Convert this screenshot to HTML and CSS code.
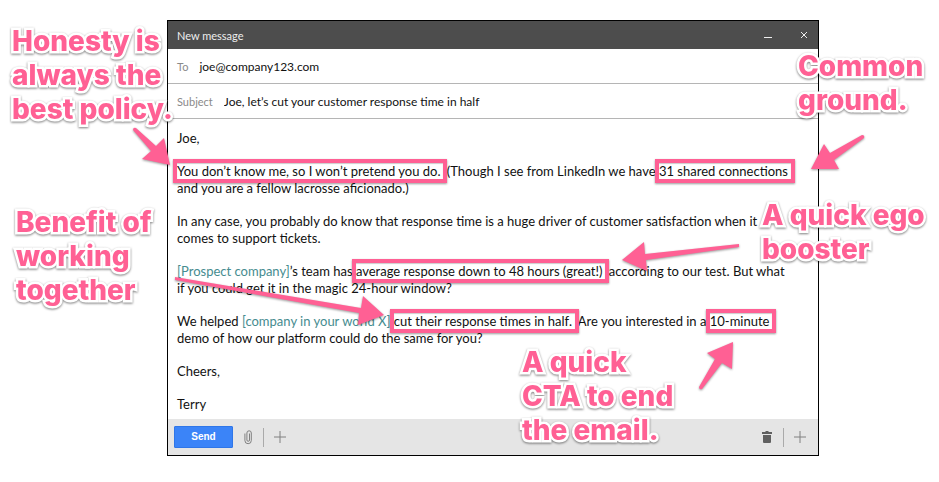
FILE: index.html
```html
<!DOCTYPE html>
<html lang="en">

<head>
  <meta charset="UTF-8" />
  <meta name="viewport" content="width=device-width, initial-scale=1.0" />
  <title>New message</title>
  <link rel="stylesheet" href="styles.css">
</head>

<body>
  <main class="stage">

    <!-- Email window -->
    <form class="mail">
      <header class="mail-header">
        <h1>New message</h1>
        <button type="button" class="icon-btn" aria-label="Minimize">
          <svg width="10" height="10" viewBox="0 0 10 10"><path d="M1 7.500h8" /></svg>
        </button>
        <button type="button" class="icon-btn" aria-label="Close">
          <svg width="10" height="10" viewBox="0 0 10 10"><path d="M2 2l6 6M8 2l-6 6" /></svg>
        </button>
      </header>

      <div class="field">
        <label for="to">To</label>
        <input type="text" id="to" value="joe@company123.com">
      </div>
      <div class="field">
        <label for="subject">Subject</label>
        <input type="text" id="subject" value="Joe, let’s cut your customer response time in half">
      </div>

      <div class="mail-body">
        <p>Joe,</p>
        <p><span class="mark">You don’t know me, so I won’t pretend you do.</span> (Though I see from LinkedIn we have <span class="mark">31 shared connections</span><br>
          and you are a fellow lacrosse aficionado.)</p>
        <p>In any case, you probably do know that response time is a huge driver of customer satisfaction when it<br>
          comes to support tickets.</p>
        <p><span class="token">[Prospect company]</span>’s team has <span class="mark">average response down to 48 hours (great!)</span> according to our test. But what<br>
          if you could get it in the magic 24-hour window?</p>
        <p>We helped <span class="token">[company in your world X]</span> <span class="mark">cut their response times in half.</span> Are you interested in a <span class="mark">10-minute</span><br>
          demo of how our platform could do the same for you?</p>
        <p>Cheers,</p>
        <p>Terry</p>
      </div>

      <footer class="mail-footer">
        <button type="button" class="send">Send</button>
        <button type="button" class="tool" aria-label="Attach file">
          <svg width="10" height="16" viewBox="0 0 10 16"><path d="M6.5 4.500v6.500a1.300 1.300 0 0 1-2.600 0V4a2.200 2.200 0 0 1 4.400 0v7.500a3.200 3.200 0 0 1-6.400 0V4.500" /></svg>
        </button>
        <span class="divider"></span>
        <button type="button" class="tool" aria-label="More options">
          <svg width="12" height="12" viewBox="0 0 12 12"><path d="M6 0v12M0 6h12" /></svg>
        </button>
        <span class="spacer"></span>
        <button type="button" class="tool trash" aria-label="Discard">
          <svg width="12" height="14" viewBox="0 0 12 14"><path d="M1 2h3l1-1h2l1 1h3v2H1zM2 5h8v7q0 1-1 1H3q-1 0-1-1z" /></svg>
        </button>
        <span class="divider"></span>
        <button type="button" class="tool" aria-label="More">
          <svg width="12" height="12" viewBox="0 0 12 12"><path d="M6 0v12M0 6h12" /></svg>
        </button>
      </footer>
    </form>

    <!-- Arrows -->
    <svg class="arrows" width="939" height="482" viewBox="0 0 939 482" aria-hidden="true">
      <path d="M136 128L156 146L164 138L170 165L142 159L151 151L133 130Q133 127 136 128Z" />
      <path d="M862 135L830 153L824 144L811 169H839L834 160L864 138Q865 135 862 135Z" />
      <path d="M739 244L645 254L644 242L622 260L647 271L646 260L739 247Z" />
      <path d="M175 277L361 308L363 296L384 315L358 325L359 313L175 280Z" />
      <path d="M699 387L715 359L707 353L733 342L732 369L722 363L702 389Q699 390 699 387Z" />
    </svg>

    <!-- Notes -->
    <p class="note note-honesty">Honesty is<br>always the<br>best policy.</p>
    <p class="note note-common">Common<br>ground.</p>
    <p class="note note-benefit">Benefit of<br>working<br>together</p>
    <p class="note note-ego">A quick ego<br>booster</p>
    <p class="note note-cta">A quick<br>CTA to end<br>the email.</p>
  </main>
</body>

</html>
```
FILE: styles.css
```css
* {
  margin: 0;
  padding: 0;
  box-sizing: border-box;
}

body {
  background-color: #fff;
  color: #111;
  font-family: Lato, "Open Sans", sans-serif;
  font-size: 13px;
  line-height: 17px;
}

button,
input {
  font: inherit;
  color: inherit;
  border: none;
  background: none;
}

button {
  cursor: pointer;
}

svg {
  display: block;
}

.stage {
  position: relative;
  padding: 20px 120px 26px 167px;
}

/* Email window */
.mail {
  border: 1px solid #000;
  background-color: #fff;
}

.mail-header {
  display: flex;
  align-items: center;
  gap: 26px;
  height: 28px;
  padding: 0 9px;
  background-color: #4d4d4d;
  color: #eee;
}

.mail-header h1 {
  flex: 1;
  font-size: 11px;
  font-weight: normal;
}

.icon-btn svg {
  fill: none;
  stroke: #eee;
}

.field {
  display: flex;
  align-items: center;
  gap: 11px;
  height: 35px;
  padding: 0 9px;
  border-bottom: 1px solid #b5b5b5;
  font-size: 12px;
}

.field label {
  color: #8a8a8a;
  font-size: 11px;
}

.field input {
  flex: 1;
  min-width: 0;
  outline: none;
}

.mail-body {
  display: flex;
  flex-direction: column;
  gap: 16px;
  padding: 11px 9px 6px;
  white-space: nowrap;
}

.token {
  color: #468c8f;
}

.mark {
  position: relative;
  padding-right: 3px;
}

.mark::after {
  content: "";
  position: absolute;
  inset: -4px;
  border: 4px solid #ff6094;
  box-shadow: 0 1px 2px rgba(0, 0, 0, 0.4), inset 0 1px 1px rgba(0, 0, 0, 0.2);
}

.mail-footer {
  display: flex;
  align-items: center;
  gap: 10px;
  height: 36px;
  padding: 0 12px 0 6px;
  background-color: #e5e5e5;
}

.send {
  width: 59px;
  height: 22px;
  border: 1px solid #2f76e8;
  border-radius: 1px;
  background-color: #3b84f8;
  color: #fff;
  font-family: "Liberation Sans", sans-serif;
  font-size: 10px;
  font-weight: bold;
  line-height: 20px;
}

.tool svg {
  fill: none;
  stroke: #808080;
}

.tool.trash svg {
  fill: #606060;
  stroke: none;
}

.divider {
  width: 1px;
  height: 19px;
  background-color: #aaa;
}

.spacer {
  flex: 1;
}

/* Notes drawn over the window */
.arrows {
  position: absolute;
  top: 0;
  left: 0;
  fill: #ff6094;
  filter: drop-shadow(0 1px 1px rgba(0, 0, 0, 0.4));
  pointer-events: none;
}

.note {
  position: absolute;
  color: #ff6094;
  font-family: Inter, sans-serif;
  font-size: 28px;
  font-weight: 800;
  line-height: 34px;
  white-space: nowrap;
  -webkit-text-stroke: 5px #fff;
  paint-order: stroke fill;
  filter: drop-shadow(0 1px 1px rgba(0, 0, 0, 0.5));
}

.note-honesty {
  top: 24px;
  left: 12px;
}

.note-common {
  top: 49px;
  left: 798px;
}

.note-benefit {
  top: 205px;
  left: 16px;
}

.note-ego {
  top: 198px;
  left: 762px;
}

.note-cta {
  top: 345px;
  left: 522px;
}
```
